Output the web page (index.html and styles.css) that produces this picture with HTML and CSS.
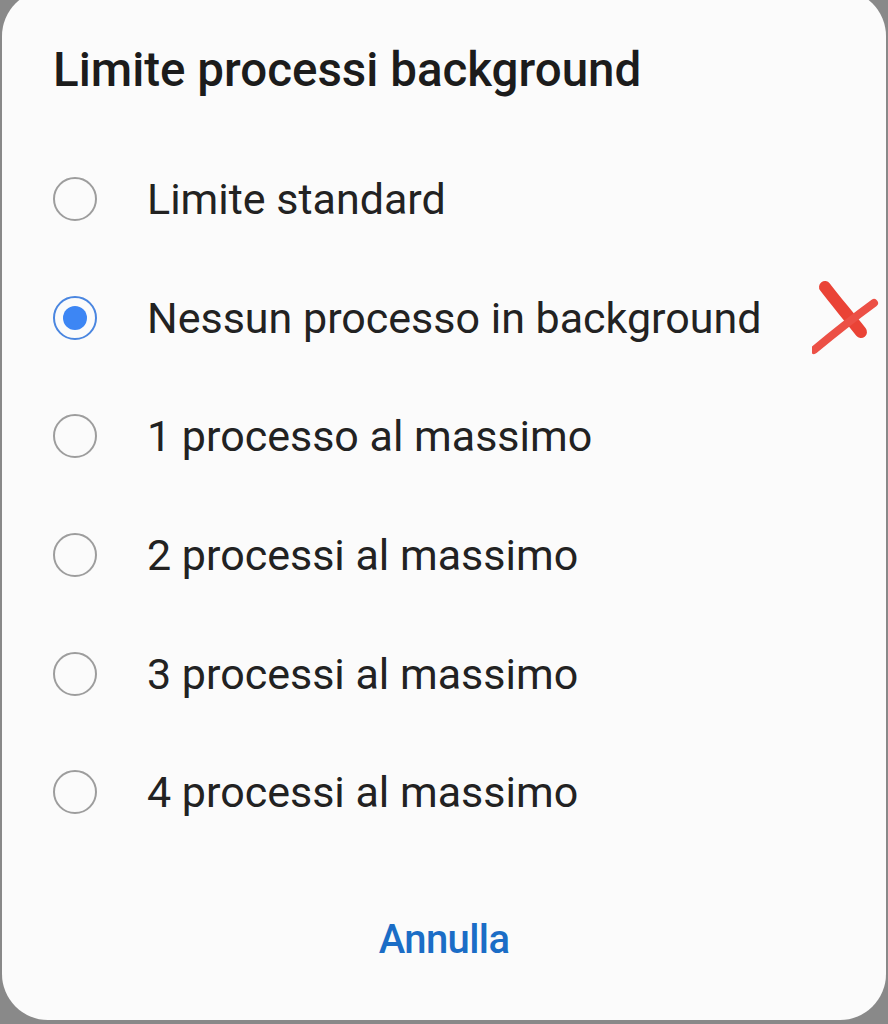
FILE: index.html
```html
<!DOCTYPE html>
<html>
<head>
<meta charset="UTF-8">
<title>Limite processi background</title>
<link rel="stylesheet" href="styles.css">
</head>
<body>
	<div class="dialog">
		<h1 class="dialog-title">Limite processi background</h1>

		<ul class="options">
			<li class="option"><span class="radio"></span><span class="label">Limite standard</span></li>
			<li class="option checked">
				<span class="radio"></span><span class="label">Nessun processo in background</span>
				<!-- segno rosso fatto a mano -->
				<svg class="cross" width="70" height="80" viewBox="0 0 70 80">
					<path d="M13 12 C22 24 34 38 49 57" stroke="#ea4336" stroke-width="12" stroke-linecap="round" fill="none"/>
					<path d="M2 75 C20 60 40 44 62 28" stroke="#ec5046" stroke-width="8" stroke-linecap="round" fill="none"/>
				</svg>
			</li>
			<li class="option"><span class="radio"></span><span class="label">1 processo al massimo</span></li>
			<li class="option"><span class="radio"></span><span class="label">2 processi al massimo</span></li>
			<li class="option"><span class="radio"></span><span class="label">3 processi al massimo</span></li>
			<li class="option"><span class="radio"></span><span class="label">4 processi al massimo</span></li>
		</ul>

		<div class="actions">
			<span class="btn-cancel">Annulla</span>
		</div>
	</div>
</body>
</html>
```

FILE: styles.css
```css
/* sfondo grigio dietro il dialogo */
body{margin:0; background-color:#898989; font-family:Roboto, "Noto Sans", sans-serif; color:#222;
	height:1024px; overflow:hidden;}

/* scheda bianca */
.dialog{margin:-10px 2px 0; height:1030px; box-sizing:border-box; padding-top:52px;
	background-color:#fbfbfb; border-radius:46px;}

.dialog-title{margin:0; padding-left:51px; font-size:47.5px; line-height:56px; font-weight:500;
	color:#1c1c1c;}

/* lista delle opzioni */
.options{list-style:none; margin:42px 0 0; padding:0;}
.option{position:relative; display:flex; align-items:center; height:118.6px; padding-left:51px;}
.label{font-size:43px; line-height:50px; margin-left:50px; color:#222;}

.radio{width:44px; height:44px; box-sizing:border-box; border:2px solid #9d9d9d; border-radius:50%;
	flex-shrink:0; display:flex; align-items:center; justify-content:center;}
.checked .radio{border-color:#4a86e0;}
.checked .radio::after{content:""; width:24px; height:24px; border-radius:50%; background-color:#3d86f4;}

.cross{position:absolute; left:810px; top:16px;}

/* pulsante annulla */
.actions{margin-top:63px; text-align:center;}
.btn-cancel{font-size:40px; line-height:50px; font-weight:500; color:#1b6dc6; letter-spacing:-0.6px;}
```
